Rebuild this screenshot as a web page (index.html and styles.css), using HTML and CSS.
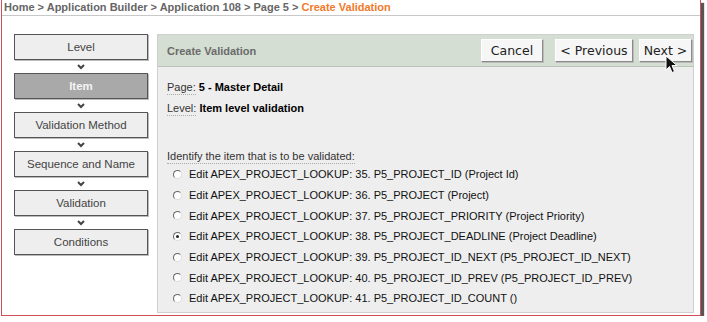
FILE: index.html
```html
<!DOCTYPE html>
<html>
<head>
<meta charset="UTF-8">
<title>Create Validation</title>
<link rel="stylesheet" href="styles.css">
</head>
<body>
<div id="frame">
<div id="crumbs">Home &gt; Application Builder &gt; Application 108 &gt; Page 5 &gt; <span class="current">Create Validation</span></div>
<div id="main">
<div id="steps">
<div class="step">Level</div>
<div class="arrow"><svg width="8" height="6" viewBox="0 0 8 6"><polyline points="1,1 4,4 7,1" fill="none" stroke="#444" stroke-width="2"/></svg></div>
<div class="step active">Item</div>
<div class="arrow"><svg width="8" height="6" viewBox="0 0 8 6"><polyline points="1,1 4,4 7,1" fill="none" stroke="#444" stroke-width="2"/></svg></div>
<div class="step">Validation Method</div>
<div class="arrow"><svg width="8" height="6" viewBox="0 0 8 6"><polyline points="1,1 4,4 7,1" fill="none" stroke="#444" stroke-width="2"/></svg></div>
<div class="step">Sequence and Name</div>
<div class="arrow"><svg width="8" height="6" viewBox="0 0 8 6"><polyline points="1,1 4,4 7,1" fill="none" stroke="#444" stroke-width="2"/></svg></div>
<div class="step">Validation</div>
<div class="arrow"><svg width="8" height="6" viewBox="0 0 8 6"><polyline points="1,1 4,4 7,1" fill="none" stroke="#444" stroke-width="2"/></svg></div>
<div class="step">Conditions</div>
</div>
<div id="panel">
<div class="panelHead">
<span class="title">Create Validation</span>
<div class="buttons">
<button class="button cancel">Cancel</button>
<button class="button prev">&lt; Previous</button>
<button class="button next">Next &gt;</button>
</div>
<svg class="cursor" width="13" height="19" viewBox="0 0 13 19"><path d="M1,1 L1,15 L4.5,11.5 L7,17.5 L9.5,16.5 L7,10.5 L12,10.5 Z" fill="#111" stroke="#fff" stroke-width="1"/></svg>
</div>
<div class="panelBody">
<div class="field"><span class="label">Page:</span> <b>5 - Master Detail</b></div>
<div class="field"><span class="label">Level:</span> <b>Item level validation</b></div>
<div class="prompt"><span class="label">Identify the item that is to be validated:</span></div>
<div class="option"><span class="radio"></span>Edit APEX_PROJECT_LOOKUP: 35. P5_PROJECT_ID (Project Id)</div>
<div class="option"><span class="radio"></span>Edit APEX_PROJECT_LOOKUP: 36. P5_PROJECT (Project)</div>
<div class="option"><span class="radio"></span>Edit APEX_PROJECT_LOOKUP: 37. P5_PROJECT_PRIORITY (Project Priority)</div>
<div class="option"><span class="radio checked"></span>Edit APEX_PROJECT_LOOKUP: 38. P5_PROJECT_DEADLINE (Project Deadline)</div>
<div class="option"><span class="radio"></span>Edit APEX_PROJECT_LOOKUP: 39. P5_PROJECT_ID_NEXT (P5_PROJECT_ID_NEXT)</div>
<div class="option"><span class="radio"></span>Edit APEX_PROJECT_LOOKUP: 40. P5_PROJECT_ID_PREV (P5_PROJECT_ID_PREV)</div>
<div class="option"><span class="radio"></span>Edit APEX_PROJECT_LOOKUP: 41. P5_PROJECT_ID_COUNT ()</div>
</div>
</div>
</div>
</div>
</body>
</html>
```
FILE: styles.css
```css
body{margin:0;background:#fff;font-family:"Liberation Sans",Arial,sans-serif;font-size:11px;color:#222;}
#frame{margin-left:1px;width:700px;height:316px;border:1px solid #d24d5a;border-top:none;box-shadow:3px 3px 1px #555;box-sizing:border-box;overflow:hidden;position:relative;}
#crumbs{height:15px;line-height:14px;padding-left:2px;font-size:11px;font-weight:bold;color:#666;border-bottom:1px solid #c8c8c8;white-space:nowrap;}
#crumbs .current{color:#f07a2c;}
#main{display:flex;padding:18px 6px 0 12px;gap:9px;}
#steps{width:134px;flex:none;}
.step{height:24px;line-height:24px;text-align:center;background:#eeeeee;border:1px solid #555;box-shadow:1px 1px 0 #bbb;color:#444;font-size:11.5px;}
.step.active{background:#a9a9a9;color:#f4f4f4;font-weight:bold;}
.arrow{height:13px;display:flex;align-items:center;justify-content:center;}
.arrow svg{display:block;}
#panel{flex:1;height:279px;background:#eeeeee;border:1px solid #cfcfcf;box-sizing:border-box;}
.panelHead{height:31px;background:#d4ded2;border-bottom:1px solid #b9c3b7;display:flex;align-items:center;justify-content:space-between;padding:0 1px 0 9px;position:relative;}
.panelHead .title{font-weight:bold;color:#6b6b6b;}
.buttons{display:flex;gap:6px;}
.button{font-family:"DejaVu Sans",sans-serif;font-size:12.5px;color:#222;background:#f6f6f6;height:23px;padding:0;text-align:center;border:1px solid;border-color:#fff #8a8a8a #8a8a8a #fff;box-shadow:1px 1px 0 #bbb;}
.button.cancel{width:62px;}
.button.prev{width:78px;margin-left:6px;}
.button.next{width:53px;}
.cursor{position:absolute;left:507px;top:20px;}
.panelBody{padding:11px 9px;}
.field{height:21px;line-height:18px;color:#000;}
.label{color:#333;border-bottom:1px dotted #aaa;padding-bottom:1px;}
.prompt{margin-top:28px;height:16px;line-height:16px;}
.option{height:20.7px;line-height:18px;display:flex;align-items:center;padding-left:6px;color:#111;}
.radio{width:7px;height:7px;border-radius:50%;border:1px solid;border-color:#666 #ddd #ddd #666;background:#fff;margin-right:7px;position:relative;}
.radio.checked::after{content:"";position:absolute;left:2px;top:2px;width:3px;height:3px;border-radius:50%;background:#222;}
```
